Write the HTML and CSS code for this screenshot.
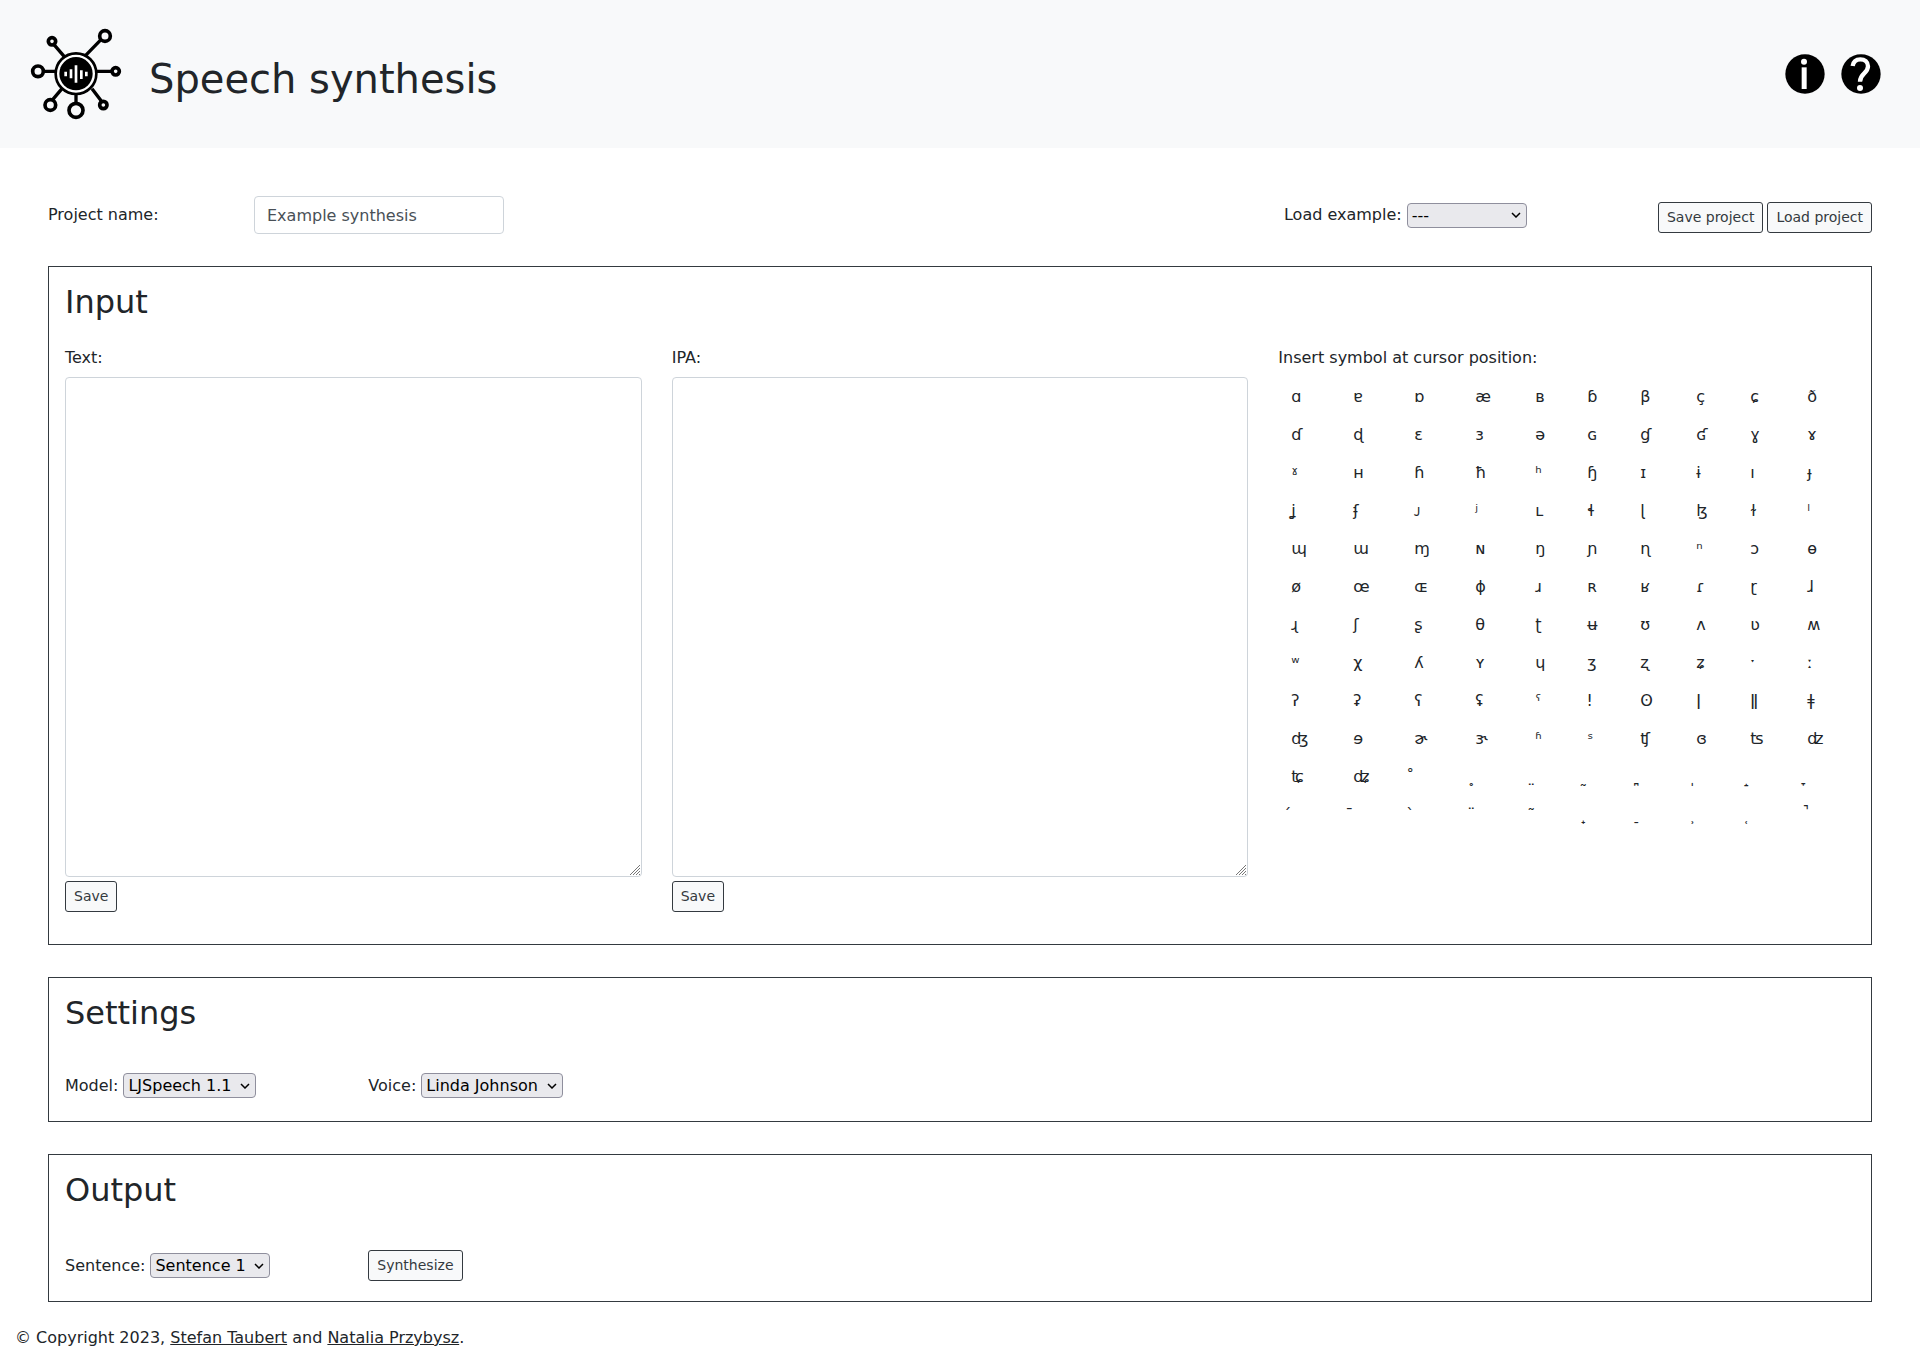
FILE: index.html
```html
<!DOCTYPE html>
<html lang="en">
<head>
<meta charset="utf-8">
<meta name="viewport" content="width=device-width, initial-scale=1">
<title>Speech synthesis</title>
<link rel="stylesheet" href="styles.css">
</head>
<body>
<header class="header">
  <svg class="logo" viewBox="0 0 330 330" aria-hidden="true">
    <g fill="none" stroke="#000">
      <g stroke-width="11">
        <path d="M102 74L133 110M243 59L197 106M72 154H106M230 154H275M126 206L98 239M216 206L244 243M168 222V248" stroke-width="10"/>
        <circle cx="96" cy="64" r="11"/>
        <circle cx="255" cy="48" r="16"/>
        <circle cx="54" cy="154" r="16"/>
        <circle cx="287" cy="154" r="11"/>
        <circle cx="91" cy="255" r="16"/>
        <circle cx="250" cy="255" r="11"/>
        <circle cx="168" cy="271" r="21"/>
      </g>
      <circle cx="168" cy="161" r="61" stroke-width="8" fill="#fff"/>
    </g>
    <circle cx="168" cy="161" r="50"/>
    <path d="M137 155V169M153 148V175M168 136V188M184 151V177M199 155V169" fill="none" stroke="#fff" stroke-width="8"/>
  </svg>
  <h1 class="title">Speech synthesis</h1>
  <nav class="header-links">
    <a href="#info" aria-label="Info">
      <svg class="round-icon" viewBox="0 0 120 120" aria-hidden="true">
        <circle cx="60" cy="60" r="59"/>
        <circle cx="57" cy="23" r="9" fill="#fff"/>
        <path d="M50 40H65V105H50Z" fill="#fff"/>
      </svg>
    </a>
    <a href="#help" aria-label="Help">
      <svg class="round-icon" viewBox="0 0 120 120" aria-hidden="true">
        <circle cx="60" cy="60" r="59"/>
        <path d="M35 36C37 22 46 16 58 16C71 16 81 24 81 37C81 59 57 58 57 83" fill="none" stroke="#fff" stroke-width="13"/>
        <circle cx="57" cy="102" r="9" fill="#fff"/>
      </svg>
    </a>
  </nav>
</header>

<main class="main">
  <div class="toolbar">
    <label for="project">Project name:</label>
    <input class="text-input" id="project" type="text" value="Example synthesis">
    <div class="field example">
      <label for="example">Load example:</label>
      <select class="select select-example" id="example"><option>---</option></select>
    </div>
    <div class="actions">
      <button class="btn" type="button">Save project</button>
      <button class="btn" type="button">Load project</button>
    </div>
  </div>

  <section class="panel">
    <h2 class="panel-title">Input</h2>
    <div class="input-grid">
      <div class="editor">
        <label for="text">Text:</label>
        <textarea class="textarea" id="text"></textarea>
        <button class="btn" type="button">Save</button>
      </div>
      <div class="editor">
        <label for="ipa">IPA:</label>
        <textarea class="textarea" id="ipa"></textarea>
        <button class="btn" type="button">Save</button>
      </div>
      <div>
        <div>Insert symbol at cursor position:</div>
        <table class="symbols" id="symbols">
          <colgroup>
            <col class="w62"><col class="w61"><col class="w61"><col class="w60"><col class="w52">
            <col class="w53"><col class="w56"><col class="w54"><col class="w57"><col>
          </colgroup>
          <tbody></tbody>
        </table>
      </div>
    </div>
  </section>

  <section class="panel">
    <h2 class="panel-title">Settings</h2>
    <div class="row row-settings">
      <div class="field">
        <label for="model">Model:</label>
        <select class="select select-model" id="model"><option>LJSpeech 1.1</option></select>
      </div>
      <div class="field">
        <label for="voice">Voice:</label>
        <select class="select select-voice" id="voice"><option>Linda Johnson</option></select>
      </div>
    </div>
  </section>

  <section class="panel">
    <h2 class="panel-title">Output</h2>
    <div class="row">
      <div class="field">
        <label for="sentence">Sentence:</label>
        <select class="select select-sentence" id="sentence"><option>Sentence 1</option></select>
      </div>
      <div><button class="btn" type="button">Synthesize</button></div>
    </div>
  </section>
</main>

<footer class="footer">© Copyright 2023, <a href="#taubert">Stefan Taubert</a> and <a href="#przybysz">Natalia Przybysz</a>.</footer>
<script src="symbols.js"></script>
</body>
</html>
```

FILE: symbols.js
```js
const rows = [
  'ɑ ɐ ɒ æ ʙ ɓ β ç ɕ ð',
  'ɗ ɖ ɛ ɜ ə ɢ ɠ ʛ ɣ ɤ',
  'ˠ ʜ ɦ ħ ʰ ɧ ɪ ɨ ı ɟ',
  'ʝ ʄ ᴊ ʲ ʟ ɬ ɭ ɮ ɫ ˡ',
  'ɰ ɯ ɱ ɴ ŋ ɲ ɳ ⁿ ɔ ɵ',
  'ø œ ɶ ɸ ɹ ʀ ʁ ɾ ɽ ɺ',
  'ɻ ʃ ʂ θ ʈ ʉ ʊ ʌ ʋ ʍ',
  'ʷ χ ʎ ʏ ɥ ʒ ʐ ʑ ˑ ː',
  'ʔ ʡ ʕ ʢ ˤ ǃ ʘ ǀ ǁ ǂ',
  'ʤ ɘ ɚ ɝ ʱ ˢ ʧ ɞ ʦ ʣ',
  'ʨ ʥ \u030A \u0325 \u0324 \u0330 \u032A \u0329 \u031D \u031E',
  '\u0301 \u0304 \u0300 \u0308 \u0303 \u031F \u0320 \u0339 \u031C \u031A'
];

const body = document.querySelector('#symbols tbody');
for (const row of rows) {
  const tr = body.insertRow();
  for (const symbol of row.split(' ')) {
    const button = document.createElement('button');
    button.type = 'button';
    button.className = 'symbol';
    button.textContent = symbol;
    tr.insertCell().append(button);
  }
}
```

FILE: styles.css
```css
*,
*::before,
*::after {
  box-sizing: border-box;
}

body {
  margin: 0;
  background: #fff;
  color: #212529;
  font: 16px/24px "DejaVu Sans", sans-serif;
}

h1,
h2 {
  margin: 0;
  font-weight: 400;
}

a {
  color: inherit;
}

button,
input,
select,
textarea {
  font: inherit;
}

.header {
  display: flex;
  align-items: center;
  gap: 19px;
  padding: 20px 39px 18px 20px;
  background: #f8f9fa;
}

.logo {
  width: 110px;
  height: 110px;
}

.title {
  padding-top: 8px;
  font-size: 40px;
  line-height: 48px;
}

.header-links {
  display: flex;
  gap: 16px;
  margin-left: auto;
  padding-bottom: 2px;
}

.round-icon {
  display: block;
  width: 40px;
  height: 40px;
}

.main {
  display: flex;
  flex-direction: column;
  gap: 32px;
  padding: 48px 48px 24px;
}

.toolbar {
  display: grid;
  grid-template-columns: 206px 250px 1fr auto;
  align-items: center;
}

.text-input {
  width: 100%;
  height: 38px;
  padding: 6px 12px;
  border: 1px solid #ced4da;
  border-radius: 4px;
  background: #fff;
  color: #495057;
}

.example {
  justify-self: end;
  width: 374px;
}

.actions {
  display: flex;
  align-self: end;
  gap: 4px;
  padding-bottom: 1px;
}

.field {
  display: flex;
  align-items: center;
  gap: 5px;
}

.btn {
  padding: 4px 8px;
  border: 1px solid #343a40;
  border-radius: 3px;
  background: #f8f9fa;
  color: #343a40;
  font-size: 14px;
  line-height: 21px;
}

.select {
  height: 25px;
  padding: 0 20px 0 4px;
  border: 1px solid #8f8f9d;
  border-radius: 4px;
  appearance: none;
  background: #e9e9ed url("data:image/svg+xml,%3Csvg xmlns='http://www.w3.org/2000/svg' width='10' height='6'%3E%3Cpath d='M1 1l4 4 4-4' fill='none' stroke='%23000' stroke-width='1.5'/%3E%3C/svg%3E") no-repeat right 5px center;
  color: #000;
  line-height: 23px;
}

.select-example,
.select-sentence {
  width: 120px;
}

.select-model {
  width: 133px;
}

.select-voice {
  width: 142px;
}

.panel {
  padding: 16px;
  border: 1px solid #343a40;
}

.panel-title {
  font-size: 32px;
  line-height: 38px;
}

.input-grid {
  display: grid;
  grid-template-columns: repeat(3, minmax(0, 1fr));
  gap: 30px;
  padding: 25px 0 16px;
}

.editor {
  display: flex;
  flex-direction: column;
  align-items: flex-start;
}

.textarea {
  width: 100%;
  height: 500px;
  margin: 7px 0 4px;
  padding: 6px 12px;
  border: 1px solid #ced4da;
  border-radius: 4px;
  resize: vertical;
}

.textarea::-webkit-resizer {
  background: url("data:image/svg+xml,%3Csvg xmlns='http://www.w3.org/2000/svg' width='12' height='12'%3E%3Cpath d='M1 11L11 1M4 11l7-7M7 11l4-4M10 11l1-1' stroke='%23777'/%3E%3C/svg%3E") no-repeat right bottom;
}

.symbols {
  width: 100%;
  margin-top: 8px;
  border-collapse: collapse;
  table-layout: fixed;
}

.symbols td {
  padding: 0;
}

.w52 { width: 52px; }
.w53 { width: 53px; }
.w54 { width: 54px; }
.w56 { width: 56px; }
.w57 { width: 57px; }
.w60 { width: 60px; }
.w61 { width: 61px; }
.w62 { width: 62px; }

.symbol {
  display: block;
  height: 38px;
  padding: 6px 12px;
  border: 1px solid transparent;
  background: none;
  color: #212529;
}

.row {
  display: grid;
  grid-template-columns: repeat(6, minmax(0, 1fr));
  align-items: center;
  gap: 30px;
  margin-top: 41px;
  padding-bottom: 4px;
}

.row-settings {
  align-items: start;
  min-height: 32px;
}

.footer {
  padding: 0 15px;
}
```
